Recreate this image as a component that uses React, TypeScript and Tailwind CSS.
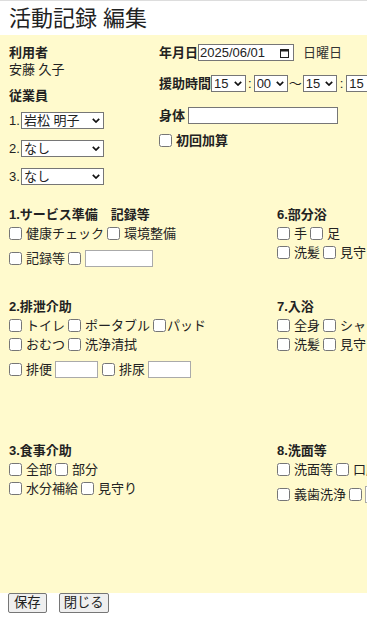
import React from "react";

const font = { fontFamily: '"Liberation Sans", "Noto Sans CJK JP", sans-serif' };

function Cb({ label, tight }: { label?: string; tight?: boolean }) {
  return (
    <label className="flex items-center mr-[3px]">
      <input type="checkbox" className="w-[13px] h-[13px] m-0" />
      {label ? <span className={tight ? "ml-[1px]" : "ml-[4px]"}>{label}</span> : null}
    </label>
  );
}

function TextBox({ w }: { w: string }) {
  return <input type="text" className={`${w} h-[17px] border border-[#aaaaaa] bg-white`} />;
}

function Row({ children, input }: { children: React.ReactNode; input?: boolean }) {
  return (
    <div className={`flex items-center h-[19px] whitespace-nowrap ${input ? "mt-[6px]" : ""}`}>
      {children}
    </div>
  );
}

function Head({ children }: { children: React.ReactNode }) {
  return <div className="font-bold h-[19px] leading-[19px] whitespace-nowrap">{children}</div>;
}

function Sel({ w, value, options }: { w: string; value: string; options: string[] }) {
  return (
    <span className={`relative inline-flex shrink-0 ${w} h-[17px]`}>
      <select
        defaultValue={value}
        className="appearance-none w-full h-[17px] border border-[#767676] bg-white pl-[2px] pr-[12px] text-[13px] leading-[15px] rounded-none"
      >
        {options.map((o) => (
          <option key={o} value={o}>
            {o}
          </option>
        ))}
      </select>
      <svg
        className="absolute right-[4px] top-[6px] pointer-events-none"
        width="8"
        height="5"
        viewBox="0 0 8 5"
      >
        <path d="M0.8 0.8 L4 4 L7.2 0.8" fill="none" stroke="#111" strokeWidth="1.7" />
      </svg>
    </span>
  );
}

export default function App() {
  return (
    <div className="w-[367px] overflow-hidden text-[13px] text-[#222] bg-white" style={font}>
      <div className="h-[35px] border-t border-[#dddddd] flex items-center pl-[9px] text-[22px] whitespace-nowrap">
        活動記録 編集
      </div>
      <div className="h-[558px] bg-[#fffacd] w-[500px]">
        <div className="flex pt-[9px] px-[9px] leading-[17px]">
          <div className="w-[150px] shrink-0">
            <div className="font-bold">利用者</div>
            <div>安藤 久子</div>
            <div className="font-bold mt-[9px]">従業員</div>
            <div className="mt-[8px] flex items-center h-[17px]">
              <span className="w-[12px]">1.</span>
              <Sel w="w-[83px]" value="岩松 明子" options={["岩松 明子", "なし"]} />
            </div>
            <div className="mt-[11px] flex items-center h-[17px]">
              <span className="w-[12px]">2.</span>
              <Sel w="w-[83px]" value="なし" options={["なし", "岩松 明子"]} />
            </div>
            <div className="mt-[11px] flex items-center h-[17px]">
              <span className="w-[12px]">3.</span>
              <Sel w="w-[83px]" value="なし" options={["なし", "岩松 明子"]} />
            </div>
          </div>
          <div className="whitespace-nowrap">
            <div className="flex items-center h-[17px]">
              <span className="font-bold">年月日</span>
              <div className="w-[96px] h-[17px] border border-[#767676] bg-white flex items-center justify-between pl-[1px] pr-[4px]">
                <span>2025/06/01</span>
                <svg width="9" height="10" viewBox="0 0 9 10">
                  <rect x="0.5" y="1.5" width="8" height="8" fill="none" stroke="#222" strokeWidth="1" />
                  <rect x="0" y="1" width="9" height="2.5" fill="#222" />
                </svg>
              </div>
              <span className="ml-[9px] text-[#333]">日曜日</span>
            </div>
            <div className="mt-[14px] flex items-center h-[17px]">
              <span className="font-bold">援助時間</span>
              <Sel w="w-[35px]" value="15" options={["15"]} />
              <span className="mx-[2px]">:</span>
              <Sel w="w-[34px]" value="00" options={["00"]} />
              <span className="mx-[1px]">〜</span>
              <Sel w="w-[34px]" value="15" options={["15"]} />
              <span className="mx-[3px]">:</span>
              <Sel w="w-[36px]" value="15" options={["15"]} />
            </div>
            <div className="mt-[15px] flex items-center h-[17px]">
              <span className="font-bold">身体</span>
              <input type="text" className="ml-[3px] w-[150px] h-[17px] border border-[#767676] bg-white" />
            </div>
            <div className="mt-[8px] flex items-center h-[17px] font-bold">
              <Cb label="初回加算" />
            </div>
          </div>
        </div>

        <div className="mt-[20px] px-[9px]">
          <div className="flex h-[92px]">
            <div className="w-[268px] shrink-0">
              <Head>1.サービス準備　記録等</Head>
              <Row>
                <Cb label="健康チェック" />
                <Cb label="環境整備" />
              </Row>
              <Row input>
                <Cb label="記録等" />
                <Cb />
                <span className="ml-[1px]">
                  <TextBox w="w-[68px]" />
                </span>
              </Row>
            </div>
            <div className="shrink-0">
              <Head>6.部分浴</Head>
              <Row>
                <Cb label="手" />
                <Cb label="足" />
              </Row>
              <Row>
                <Cb label="洗髪" />
                <Cb label="見守り" />
              </Row>
            </div>
          </div>

          <div className="flex h-[144px]">
            <div className="w-[268px] shrink-0">
              <Head>2.排泄介助</Head>
              <Row>
                <Cb label="トイレ" />
                <Cb label="ポータブル" />
                <Cb label="パッド" tight />
              </Row>
              <Row>
                <Cb label="おむつ" />
                <Cb label="洗浄清拭" />
              </Row>
              <Row input>
                <Cb label="排便" />
                <span className="mr-[4px]">
                  <TextBox w="w-[43px]" />
                </span>
                <Cb label="排尿" />
                <TextBox w="w-[43px]" />
              </Row>
            </div>
            <div className="shrink-0">
              <Head>7.入浴</Head>
              <Row>
                <Cb label="全身" />
                <Cb label="シャワー浴" />
              </Row>
              <Row>
                <Cb label="洗髪" />
                <Cb label="見守り" />
              </Row>
            </div>
          </div>

          <div className="flex">
            <div className="w-[268px] shrink-0">
              <Head>3.食事介助</Head>
              <Row>
                <Cb label="全部" />
                <Cb label="部分" />
              </Row>
              <Row>
                <Cb label="水分補給" />
                <Cb label="見守り" />
              </Row>
            </div>
            <div className="shrink-0">
              <Head>8.洗面等</Head>
              <Row>
                <Cb label="洗面等" />
                <Cb label="口腔ケア" />
              </Row>
              <Row input>
                <Cb label="義歯洗浄" />
                <Cb />
                <TextBox w="w-[60px]" />
              </Row>
            </div>
          </div>
        </div>
      </div>
      <div className="flex items-start pl-[8px] gap-[12px] h-[28px]">
        <button className="h-[20px] px-[5px] border border-[#767676] bg-[#efefef] rounded-[2px] text-[13.33px] leading-none">
          保存
        </button>
        <button className="h-[20px] px-[4px] border border-[#767676] bg-[#efefef] rounded-[2px] text-[13.33px] leading-none">
          閉じる
        </button>
      </div>
    </div>
  );
}
